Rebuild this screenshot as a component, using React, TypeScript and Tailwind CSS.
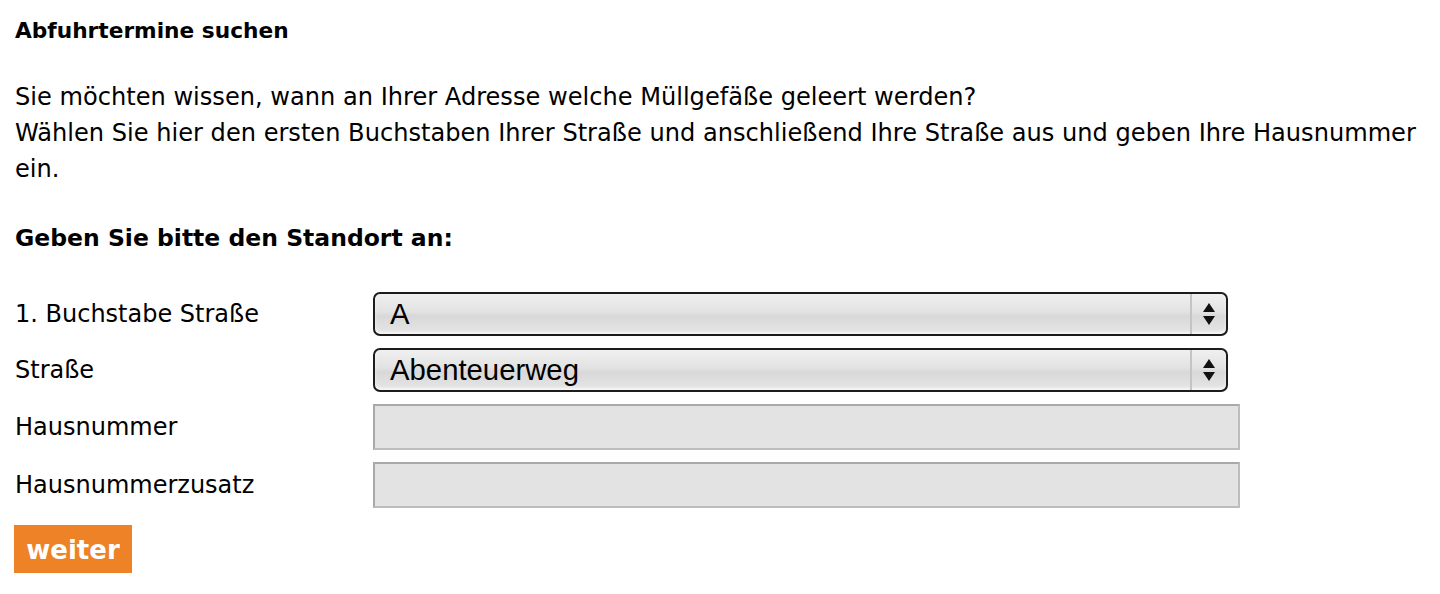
import React from "react";

function Arrows() {
  return (
    <svg width="14" height="26" viewBox="0 0 14 26">
      <polygon points="7,2 13,11 1,11" fill="#111" />
      <polygon points="1,15 13,15 7,24" fill="#111" />
    </svg>
  );
}

function FakeSelect({ value }: { value: string }) {
  return (
    <div className="flex h-[44px] w-[855px] items-stretch overflow-hidden rounded-[7px] border-2 border-[#1c1c1c] bg-[linear-gradient(to_bottom,#f0f0f0_0%,#e2e2e2_45%,#d8d8d8_55%,#e6e6e6_100%)] shadow-[inset_0_-2px_3px_rgba(255,255,255,0.7)]">
      <div className="flex flex-1 items-center pl-[15px] font-['Liberation_Sans',Arial,sans-serif] text-[29.3px] text-black">
        {value}
      </div>
      <div className="w-[2px] bg-[#c4c4c4]" />
      <div className="flex w-[34px] items-center justify-center">
        <Arrows />
      </div>
    </div>
  );
}

export default function App() {
  return (
    <div className="min-h-[594px] bg-white px-[15px] pt-[16px] font-['DejaVu_Sans',Verdana,sans-serif] text-black">
      <h1 className="text-[21.7px] font-bold leading-[30px]">Abfuhrtermine suchen</h1>
      <p className="mt-[34px] text-[24.1px] leading-[35.8px]">
        Sie möchten wissen, wann an Ihrer Adresse welche Müllgefäße geleert werden?
        <br />
        Wählen Sie hier den ersten Buchstaben Ihrer Straße und anschließend Ihre Straße aus und geben Ihre Hausnummer ein.
      </p>
      <h2 className="mt-[36px] text-[23.5px] font-bold leading-[30px]">Geben Sie bitte den Standort an:</h2>
      <div className="mt-[39px] flex flex-col gap-[12px]">
        <div className="flex items-center">
          <label className="w-[358px] text-[24px]">1. Buchstabe Straße</label>
          <FakeSelect value="A" />
        </div>
        <div className="flex items-center">
          <label className="w-[358px] text-[24px]">Straße</label>
          <FakeSelect value="Abenteuerweg" />
        </div>
        <div className="flex items-center">
          <label className="w-[358px] text-[24px]">Hausnummer</label>
          <input className="h-[46px] w-[867px] border-2 border-[#bdbdbd] border-t-[#a9a9a9] border-l-[#a9a9a9] bg-[#e3e3e3] outline-none" />
        </div>
        <div className="flex items-center">
          <label className="w-[358px] text-[24px]">Hausnummerzusatz</label>
          <input className="h-[46px] w-[867px] border-2 border-[#bdbdbd] border-t-[#a9a9a9] border-l-[#a9a9a9] bg-[#e3e3e3] outline-none" />
        </div>
      </div>
      <button className="mt-[17px] ml-[-1px] h-[48px] w-[118px] bg-[#ee8226] pt-[3px] text-[26px] font-bold text-white">
        weiter
      </button>
    </div>
  );
}
